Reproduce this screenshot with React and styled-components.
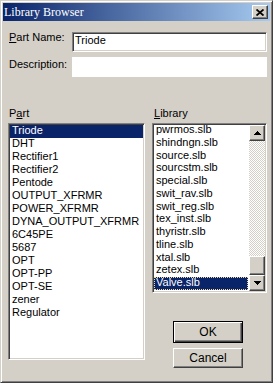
import styled, { createGlobalStyle, css } from "styled-components";

const GlobalStyle = createGlobalStyle`
  html, body {
    margin: 0;
    padding: 0;
    background: #d4d0c8;
  }
  body {
    font-family: "Liberation Sans", Arial, sans-serif;
  }
`;

const raised = css`
  background: #d4d0c8;
  border: 1px solid;
  border-color: #fff #404040 #404040 #fff;
  box-shadow: inset -1px -1px #808080;
`;

const sunken = css`
  border: 1px solid;
  border-color: #808080 #fff #fff #808080;
  box-shadow: inset 1px 1px #404040, inset -1px -1px #d4d0c8;
`;

const Window = styled.div`
  box-sizing: border-box;
  width: 273px;
  height: 383px;
  padding: 2px;
  display: flex;
  flex-direction: column;
  background: #d4d0c8;
  border: 1px solid;
  border-color: #d4d0c8 #404040 #404040 #d4d0c8;
  box-shadow: inset 1px 1px #fff, inset -1px -1px #808080;
  font-size: 11px;
  color: #000;
`;

const TitleBar = styled.div`
  height: 18px;
  display: flex;
  align-items: center;
  padding: 0 2px 0 1px;
  background: linear-gradient(to right, #0a246a, #a6caf0);
`;

const Title = styled.span`
  flex: 1;
  font-family: "Liberation Serif", "Times New Roman", serif;
  font-size: 12px;
  color: #fff;
`;

const CloseButton = styled.button`
  ${raised};
  box-sizing: border-box;
  width: 16px;
  height: 14px;
  padding: 0;
  display: flex;
  align-items: center;
  justify-content: center;
`;

const Body = styled.div`
  flex: 1;
  display: flex;
  flex-direction: column;
  padding: 11px 3px 0 5px;
`;

const FieldRow = styled.div`
  display: flex;
  align-items: flex-start;
  margin-top: ${(p) => p.$gap || 0}px;
`;

const FieldLabel = styled.label`
  box-sizing: border-box;
  width: 64px;
  padding-left: 1px;
  line-height: 11px;
  margin-top: ${(p) => p.$shift || 0}px;
`;

const Field = styled.div`
  box-sizing: border-box;
  flex: 1;
  height: 20px;
  padding: 2px 2px 0;
  line-height: 11px;
  background: #fff;
  ${(p) => p.$sunken && sunken};
`;

const Columns = styled.div`
  display: flex;
  gap: 7px;
  margin-top: 31px;
`;

const Column = styled.div`
  display: flex;
  flex-direction: column;
  ${(p) => (p.$width ? `width: ${p.$width}px;` : "flex: 1;")}
`;

const GroupLabel = styled.div`
  line-height: 11px;
  padding-left: ${(p) => p.$indent}px;
  margin-bottom: 4px;
`;

const ListBox = styled.div`
  ${sunken};
  box-sizing: border-box;
  height: ${(p) => p.$height}px;
  display: flex;
  background: #fff;
  overflow: hidden;
`;

const Items = styled.div`
  flex: 1;
  min-width: 0;
  display: flex;
  flex-direction: column;
  padding: ${(p) => (p.$flush ? "0 1px" : "1px")};
  overflow: hidden;
`;

const Item = styled.div`
  flex-shrink: 0;
  line-height: 11px;
  padding: 0 2px ${(p) => p.$rowPad || 2}px;
  white-space: nowrap;
  ${(p) =>
    p.$selected &&
    css`
      background: #0a246a;
      color: #fff;
    `}
  ${(p) =>
    p.$focused &&
    css`
      outline: 1px dotted #f5db95;
      outline-offset: -1px;
    `}
`;

const ScrollBar = styled.div`
  width: 16px;
  margin: 1px 1px 1px 0;
  display: flex;
  flex-direction: column;
`;

const ArrowButton = styled.div`
  ${raised};
  box-sizing: border-box;
  height: 16px;
  display: flex;
  align-items: center;
  justify-content: center;
`;

const Track = styled.div`
  flex: 1;
  background: repeating-conic-gradient(#fff 0 25%, #d4d0c8 0 50%) 0 0 / 2px 2px;
`;

const Thumb = styled.div`
  ${raised};
  box-sizing: border-box;
  height: 19px;
`;

const Buttons = styled.div`
  display: flex;
  flex-direction: column;
  padding-left: 21px;
`;

const PushButton = styled.button`
  box-sizing: border-box;
  width: 70px;
  height: ${(p) => p.$height}px;
  margin-top: ${(p) => p.$gap}px;
  padding: 0;
  font: 12px "Liberation Sans", Arial, sans-serif;
  color: #000;
  background: #d4d0c8;
  border: 1px solid;
  border-color: ${(p) => (p.$default ? "#000" : "#fff #404040 #404040 #fff")};
  box-shadow: ${(p) =>
    p.$default
      ? "inset 1px 1px #fff, inset -1px -1px #404040, inset -2px -2px #808080"
      : "inset -1px -1px #808080"};
`;

const parts = [
  "Triode",
  "DHT",
  "Rectifier1",
  "Rectifier2",
  "Pentode",
  "OUTPUT_XFRMR",
  "POWER_XFRMR",
  "DYNA_OUTPUT_XFRMR",
  "6C45PE",
  "5687",
  "OPT",
  "OPT-PP",
  "OPT-SE",
  "zener",
  "Regulator",
];

const libraries = [
  "pwrmos.slb",
  "shindngn.slb",
  "source.slb",
  "sourcstm.slb",
  "special.slb",
  "swit_rav.slb",
  "swit_reg.slb",
  "tex_inst.slb",
  "thyristr.slb",
  "tline.slb",
  "xtal.slb",
  "zetex.slb",
  "Valve.slb",
];

function Arrow({ down }) {
  return (
    <svg width="7" height="4" viewBox="0 0 7 4" shapeRendering="crispEdges">
      <polygon points={down ? "0,0 7,0 3.5,4" : "3.5,0 7,4 0,4"} fill="#000" />
    </svg>
  );
}

function App() {
  return (
    <>
      <GlobalStyle />
      <Window>
        <TitleBar>
          <Title>Library Browser</Title>
          <CloseButton>
            <svg width="8" height="7" viewBox="0 0 8 7">
              <path d="M0.5 0.5L7.5 6.5M7.5 0.5L0.5 6.5" stroke="#000" strokeWidth="1.8" />
            </svg>
          </CloseButton>
        </TitleBar>
        <Body>
          <FieldRow>
            <FieldLabel $shift={0}>
              <u>P</u>art Name:
            </FieldLabel>
            <Field $sunken>Triode</Field>
          </FieldRow>
          <FieldRow $gap={5}>
            <FieldLabel $shift={2}>Description:</FieldLabel>
            <Field />
          </FieldRow>
          <Columns>
            <Column $width={137}>
              <GroupLabel $indent={1}>
                P<u>a</u>rt
              </GroupLabel>
              <ListBox $height={237}>
                <Items>
                  {parts.map((name, i) => (
                    <Item key={name} $selected={i === 0}>
                      {name}
                    </Item>
                  ))}
                </Items>
              </ListBox>
            </Column>
            <Column>
              <GroupLabel $indent={2}>
                <u>L</u>ibrary
              </GroupLabel>
              <ListBox $height={170}>
                <Items $flush>
                  {libraries.map((name) => (
                    <Item
                      key={name}
                      $rowPad={1.75}
                      $selected={name === "Valve.slb"}
                      $focused={name === "Valve.slb"}
                    >
                      {name}
                    </Item>
                  ))}
                </Items>
                <ScrollBar>
                  <ArrowButton>
                    <Arrow />
                  </ArrowButton>
                  <Track />
                  <Thumb />
                  <ArrowButton>
                    <Arrow down />
                  </ArrowButton>
                </ScrollBar>
              </ListBox>
              <Buttons>
                <PushButton $default $height={22} $gap={28}>
                  OK
                </PushButton>
                <PushButton $height={20} $gap={5}>
                  Cancel
                </PushButton>
              </Buttons>
            </Column>
          </Columns>
        </Body>
      </Window>
    </>
  );
}

export default App;
